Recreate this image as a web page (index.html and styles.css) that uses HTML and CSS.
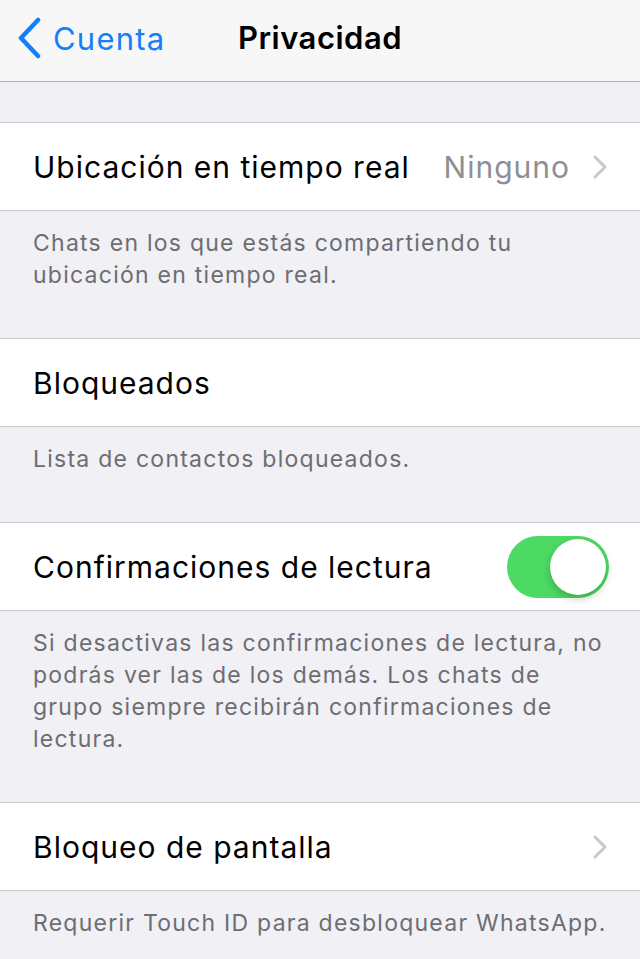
FILE: index.html
```html
<!DOCTYPE html>
<html lang="es">
<head>
  <meta charset="UTF-8">
  <meta name="viewport" content="width=device-width, initial-scale=1.0">
  <title>Privacidad</title>
  <link rel="stylesheet" href="styles.css">
</head>
<body>
  <header class="navbar">
    <a class="back" href="#">
      <svg class="back-chevron" width="26" height="42" viewBox="0 0 26 42">
        <path d="M22 3 L5 21 L22 39" fill="none" stroke="#157efb" stroke-width="4.5" stroke-linecap="round" stroke-linejoin="round"/>
      </svg>
      <span>Cuenta</span>
    </a>
    <h1>Privacidad</h1>
  </header>

  <main class="settings">
    <!-- Ubicación -->
    <div class="cell">
      <span class="cell-label">Ubicación en tiempo real</span>
      <span class="cell-value">Ninguno</span>
      <svg class="disclosure" width="16" height="26" viewBox="0 0 16 26">
        <path d="M3 3 L13 13 L3 23" fill="none" stroke="#c7c7cc" stroke-width="3" stroke-linecap="round" stroke-linejoin="round"/>
      </svg>
    </div>
    <p class="cell-footer">Chats en los que estás compartiendo tu ubicación en tiempo real.</p>

    <!-- Bloqueados -->
    <div class="cell">
      <span class="cell-label">Bloqueados</span>
    </div>
    <p class="cell-footer">Lista de contactos bloqueados.</p>

    <!-- Confirmaciones de lectura -->
    <div class="cell">
      <span class="cell-label">Confirmaciones de lectura</span>
      <span class="switch on"><span class="knob"></span></span>
    </div>
    <p class="cell-footer">Si desactivas las confirmaciones de lectura, no podrás ver las de los demás. Los chats de grupo siempre recibirán confirmaciones de lectura.</p>

    <!-- Bloqueo de pantalla -->
    <div class="cell">
      <span class="cell-label">Bloqueo de pantalla</span>
      <svg class="disclosure" width="16" height="26" viewBox="0 0 16 26">
        <path d="M3 3 L13 13 L3 23" fill="none" stroke="#c7c7cc" stroke-width="3" stroke-linecap="round" stroke-linejoin="round"/>
      </svg>
    </div>
    <p class="cell-footer">Requerir Touch ID para desbloquear WhatsApp.</p>
  </main>
</body>
</html>
```

FILE: styles.css
```css
body {
  margin: 0;
  padding: 0;
  font-family: Inter, 'Liberation Sans', sans-serif;
  background-color: #f0f0f5;
  color: #000000;
}
.navbar {
  height: 81px;
  background-color: #f7f7f7;
  border-bottom: 1px solid #b2b2b2;
  display: flex;
  align-items: center;
  justify-content: center;
  position: relative;
}
.navbar h1 {
  margin: 0 0 6px 0;
  font-size: 31px;
  font-weight: 600;
  letter-spacing: 0.5px;
}
.back {
  position: absolute;
  left: 16px;
  top: 17px;
  display: flex;
  align-items: center;
  gap: 11px;
  color: #157efb;
  text-decoration: none;
  font-size: 31px;
  letter-spacing: 1.2px;
}
.settings {
  padding-top: 40px;
}
.cell {
  height: 87px;
  background-color: white;
  border-top: 1px solid #c8c7cc;
  border-bottom: 1px solid #c8c7cc;
  display: flex;
  align-items: center;
  padding: 0 32px 0 33px;
  font-size: 30px;
  letter-spacing: 1px;
}
.cell-label {
  flex: 1;
}
.cell-value {
  color: #8e8e93;
  margin-right: 22px;
}
.disclosure {
  flex-shrink: 0;
}
.cell-footer {
  margin: 0;
  padding: 16px 30px 47px 33px;
  font-size: 23px;
  line-height: 32px;
  letter-spacing: 1.25px;
  color: #6d6d72;
}

/* Interruptor estilo iOS */
.switch {
  width: 102px;
  height: 62px;
  border-radius: 31px;
  background-color: #e5e5ea;
  position: relative;
  flex-shrink: 0;
  margin-right: -1px;
}
.switch.on {
  background-color: #4cd964;
}
.knob {
  position: absolute;
  top: 3px;
  left: 3px;
  width: 56px;
  height: 56px;
  border-radius: 50%;
  background-color: white;
  box-shadow: 0 4px 8px rgba(0, 0, 0, 0.2), 0 0 1px rgba(0, 0, 0, 0.1);
}
.switch.on .knob {
  left: 43px;
}
```
